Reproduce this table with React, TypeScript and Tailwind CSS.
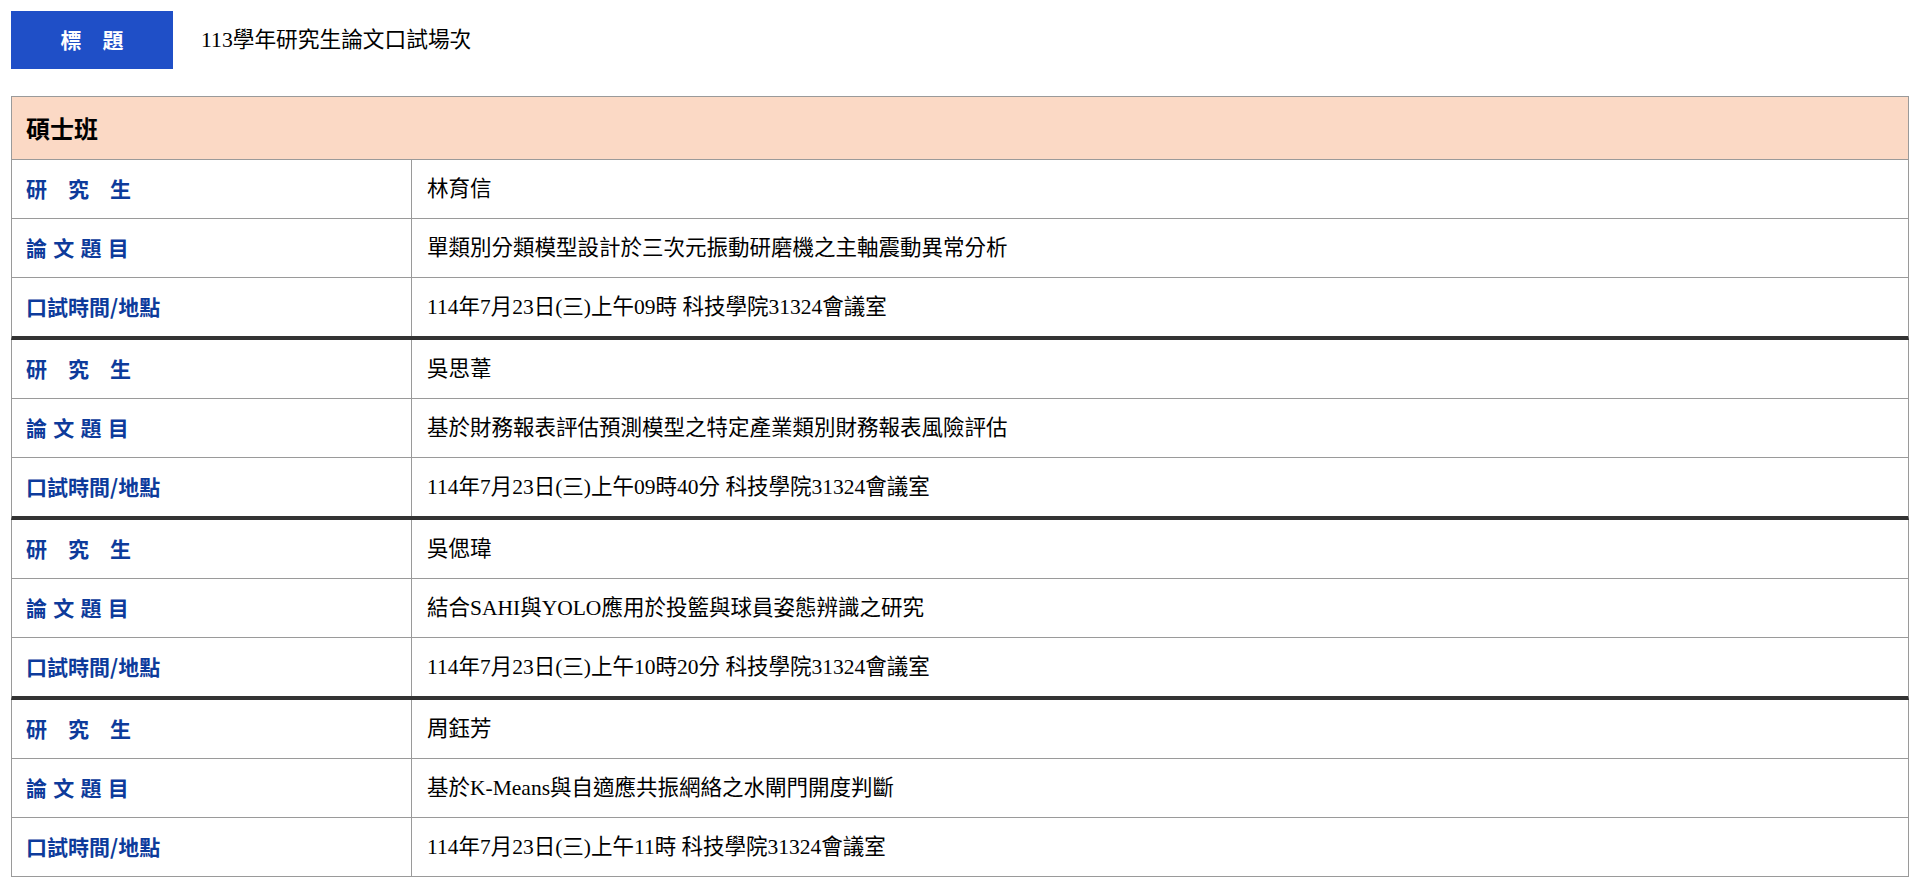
const serif = "font-['Liberation_Serif','Noto_Sans_CJK_TC',serif]";
const sans = "font-['Noto_Sans_CJK_TC','Liberation_Sans',sans-serif]";

const sessions = [
  {
    student: "林育信",
    title: "單類別分類模型設計於三次元振動研磨機之主軸震動異常分析",
    time: "114年7月23日(三)上午09時 科技學院31324會議室",
  },
  {
    student: "吳思葦",
    title: "基於財務報表評估預測模型之特定產業類別財務報表風險評估",
    time: "114年7月23日(三)上午09時40分 科技學院31324會議室",
  },
  {
    student: "吳偲瑋",
    title: "結合SAHI與YOLO應用於投籃與球員姿態辨識之研究",
    time: "114年7月23日(三)上午10時20分 科技學院31324會議室",
  },
  {
    student: "周鈺芳",
    title: "基於K-Means與自適應共振網絡之水閘門開度判斷",
    time: "114年7月23日(三)上午11時 科技學院31324會議室",
  },
];

type RowProps = {
  label: string;
  value: string;
  thick?: boolean;
};

function Row({ label, value, thick = false }: RowProps) {
  return (
    <div
      className={
        thick
          ? "flex h-[62px] border-x border-b-4 border-x-[#9a9a9a] border-b-[#333333]"
          : "flex h-[59px] border-x border-b border-[#9a9a9a]"
      }
    >
      <div
        className={`flex w-[400px] shrink-0 items-center border-r border-[#9a9a9a] pl-[14px] text-[21px] font-bold text-[#0d3b9b] ${sans}`}
      >
        <span className="whitespace-pre [word-spacing:1.5px]">{label}</span>
      </div>
      <div className={`flex items-center pl-[15px] text-[21.5px] text-black ${serif}`}>{value}</div>
    </div>
  );
}

export default function App() {
  return (
    <div className="min-h-screen bg-white pl-[11px] pr-[10px] pt-[11px]">
      <div className="flex items-center">
        <div
          className={`flex h-[58px] w-[162px] items-center justify-center bg-[#1f4fc7] text-[21px] font-bold text-white ${sans}`}
        >
          標　題
        </div>
        <div className={`ml-[28px] text-[21.7px] text-black ${serif}`}>113學年研究生論文口試場次</div>
      </div>

      <div className="mt-[27px]">
        <div
          className={`flex h-[64px] items-center border border-[#9a9a9a] bg-[#fbd9c5] pl-[14px] text-[24px] font-bold text-black ${sans}`}
        >
          碩士班
        </div>
        {sessions.map((s, i) => {
          const last = i === sessions.length - 1;
          return (
            <div key={s.student}>
              <Row label="研　究　生" value={s.student} />
              <Row label="論 文 題 目" value={s.title} />
              <Row label="口試時間/地點" value={s.time} thick={!last} />
            </div>
          );
        })}
      </div>
    </div>
  );
}
